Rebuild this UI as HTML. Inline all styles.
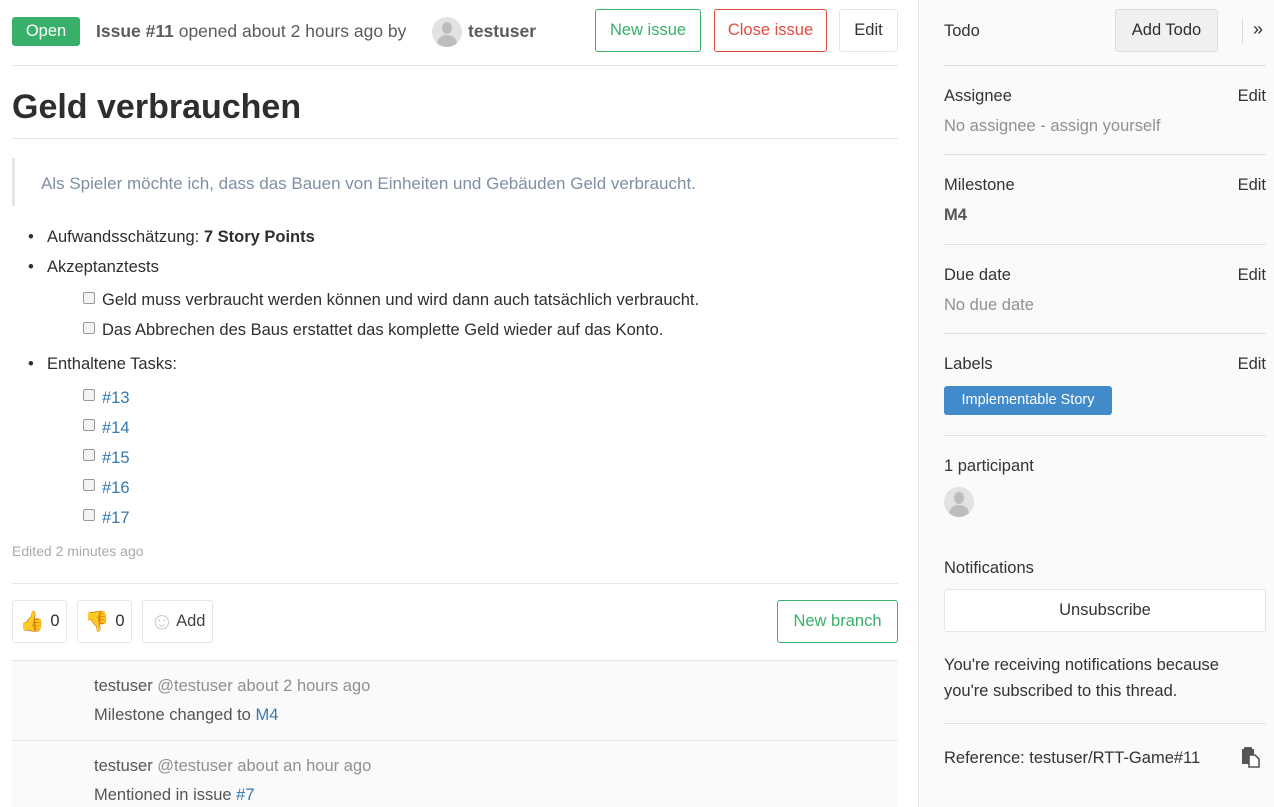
<!DOCTYPE html>
<html><head><meta charset="utf-8"><style>
*{margin:0;padding:0;box-sizing:border-box}
body{width:1274px;height:807px;overflow:hidden;background:#fff;font-family:"Liberation Sans",sans-serif;color:#2e2e2e;font-size:16.5px;position:relative}
.a{position:absolute;white-space:nowrap}
.btn{position:absolute;border:1px solid #e5e5e5;border-radius:3px;background:#fff;display:flex;align-items:center;justify-content:center;font-size:16.5px}
.hr{position:absolute;height:1px;background:#e5e5e5}
.cb{position:absolute;width:12px;height:12px;border:1px solid #999;border-radius:2px;background:#f3f3f3}
a{color:#3777b0;text-decoration:none}
.side{position:absolute;left:918px;top:0;width:356px;height:807px;background:#fafafa;border-left:1px solid #e5e5e5}
.s{position:absolute;white-space:nowrap;font-size:16.5px;color:#333}
.e{position:absolute;right:8px;font-size:16.5px;color:#333}
.g{color:#909090}
.sh{position:absolute;left:25px;width:322px;height:1px;background:#e0e0e0}
.av{position:absolute;border-radius:50%;overflow:hidden;background:#e2e2e2}
.av:before{content:"";position:absolute;left:32%;top:18%;width:36%;height:40%;border-radius:50%;background:#bdbdbd}
.av:after{content:"";position:absolute;left:18%;top:60%;width:64%;height:60%;border-radius:50% 50% 0 0;background:#bdbdbd}
.b{position:absolute;left:28px}
.b i{font-style:normal;display:inline-block;width:19px}
</style></head><body>
<div class="a" style="left:12px;top:17px;width:68px;height:29px;background:#38b06a;border-radius:3px;color:#fff;font-size:16.5px;text-align:center;line-height:29px">Open</div>
<div class="a" style="left:96px;top:21px;font-size:17.5px;color:#5c5c5c"><b>Issue #11</b> opened about 2 hours ago by</div>
<div class="av" style="left:432px;top:17px;width:30px;height:30px"></div>
<div class="a" style="left:468px;top:21px;font-size:17.5px;font-weight:bold;color:#5c5c5c">testuser</div>
<div class="btn" style="left:595px;top:9px;width:106px;height:43px;border-color:#38b06a;color:#38b06a">New issue</div>
<div class="btn" style="left:714px;top:9px;width:113px;height:43px;border-color:#e24c3f;color:#e24c3f">Close issue</div>
<div class="btn" style="left:839px;top:9px;width:59px;height:43px;color:#333">Edit</div>
<div class="hr" style="left:12px;top:65px;width:886px"></div>
<div class="a" style="left:12px;top:88px;font-size:34px;font-weight:bold;color:#2e2e2e">Geld verbrauchen</div>
<div class="hr" style="left:12px;top:138px;width:886px"></div>
<div class="a" style="left:12px;top:158px;width:3px;height:48px;background:#e5e5e5"></div>
<div class="a" style="left:41px;top:174px;font-size:17px;color:#7f8fa4">Als Spieler möchte ich, dass das Bauen von Einheiten und Gebäuden Geld verbraucht.</div>
<div class="a b" style="top:228px"><i>•</i>Aufwandsschätzung: <b>7 Story Points</b></div>
<div class="a b" style="top:258px"><i>•</i>Akzeptanztests</div>
<div class="cb" style="left:83px;top:292px"></div><div class="a" style="left:102px;top:291px">Geld muss verbraucht werden können und wird dann auch tatsächlich verbraucht.</div>
<div class="cb" style="left:83px;top:322px"></div><div class="a" style="left:102px;top:321px">Das Abbrechen des Baus erstattet das komplette Geld wieder auf das Konto.</div>
<div class="a b" style="top:355px"><i>•</i>Enthaltene Tasks:</div>
<div class="cb" style="left:83px;top:389px"></div><div class="a" style="left:102px;top:389px"><a>#13</a></div>
<div class="cb" style="left:83px;top:419px"></div><div class="a" style="left:102px;top:419px"><a>#14</a></div>
<div class="cb" style="left:83px;top:449px"></div><div class="a" style="left:102px;top:449px"><a>#15</a></div>
<div class="cb" style="left:83px;top:479px"></div><div class="a" style="left:102px;top:479px"><a>#16</a></div>
<div class="cb" style="left:83px;top:509px"></div><div class="a" style="left:102px;top:509px"><a>#17</a></div>
<div class="a" style="left:12px;top:543px;font-size:14px;color:#aaa">Edited 2 minutes ago</div>
<div class="hr" style="left:12px;top:583px;width:886px"></div>
<div class="btn" style="left:12px;top:600px;width:55px;height:43px"><span style="font-size:20px">👍</span><span style="margin-left:6px">0</span></div>
<div class="btn" style="left:77px;top:600px;width:55px;height:43px"><span style="font-size:20px">👎</span><span style="margin-left:6px">0</span></div>
<div class="btn" style="left:142px;top:600px;width:71px;height:43px;color:#444"><span style="font-size:24px;color:#ccc;margin-right:2px">☺</span>Add</div>
<div class="btn" style="left:777px;top:600px;width:121px;height:43px;border-color:#38b06a;color:#38b06a">New branch</div>
<div class="a" style="left:12px;top:660px;width:886px;height:147px;background:#fafafa;border-top:1px solid #e5e5e5"></div>
<div class="hr" style="left:12px;top:740px;width:886px"></div>
<div class="a" style="left:94px;top:677px;color:#555">testuser <span class="g">@testuser about 2 hours ago</span></div>
<div class="a" style="left:94px;top:706px;color:#555">Milestone changed to <a>M4</a></div>
<div class="a" style="left:94px;top:757px;color:#555">testuser <span class="g">@testuser about an hour ago</span></div>
<div class="a" style="left:94px;top:786px;color:#555">Mentioned in issue <a>#7</a></div>
<div class="side">
<div class="s" style="left:25px;top:22px">Todo</div>
<div class="btn" style="left:196px;top:9px;width:103px;height:43px;background:#f0f0f0;border-color:#ddd">Add Todo</div>
<div class="a" style="left:323px;top:18px;width:1px;height:26px;background:#ddd"></div>
<div class="s" style="left:334px;top:19px;font-size:18px">»</div>
<div class="sh" style="top:65px"></div>
<div class="s" style="left:25px;top:87px">Assignee</div><div class="e" style="top:87px">Edit</div>
<div class="s g" style="left:25px;top:117px">No assignee - assign yourself</div>
<div class="sh" style="top:154px"></div>
<div class="s" style="left:25px;top:176px">Milestone</div><div class="e" style="top:176px">Edit</div>
<div class="s" style="left:25px;top:206px;font-weight:bold;color:#555">M4</div>
<div class="sh" style="top:244px"></div>
<div class="s" style="left:25px;top:266px">Due date</div><div class="e" style="top:266px">Edit</div>
<div class="s g" style="left:25px;top:296px">No due date</div>
<div class="sh" style="top:333px"></div>
<div class="s" style="left:25px;top:355px">Labels</div><div class="e" style="top:355px">Edit</div>
<div class="a" style="left:25px;top:386px;width:168px;height:29px;background:#428bca;border-radius:3px;color:#fff;font-size:14.5px;text-align:center;line-height:29px">Implementable Story</div>
<div class="sh" style="top:435px"></div>
<div class="s" style="left:25px;top:457px">1 participant</div>
<div class="av" style="left:25px;top:487px;width:30px;height:30px"></div>
<div class="s" style="left:25px;top:559px">Notifications</div>
<div class="btn" style="left:25px;top:589px;width:322px;height:43px;color:#333">Unsubscribe</div>
<div class="s" style="left:25px;top:652px;line-height:26px">You're receiving notifications because<br>you're subscribed to this thread.</div>
<div class="sh" style="top:723px"></div>
<div class="s" style="left:25px;top:749px">Reference: testuser/RTT-Game#11</div>
<svg class="a" style="left:322px;top:746px" width="20" height="22" viewBox="0 0 20 22"><rect x="1" y="3" width="12" height="15" fill="#555"/><rect x="3" y="1" width="8" height="4" rx="1" fill="#555"/><path d="M8 9h6l4 4v8H8z" fill="#fff" stroke="#555" stroke-width="1.6"/></svg>
</div>
</body></html>
